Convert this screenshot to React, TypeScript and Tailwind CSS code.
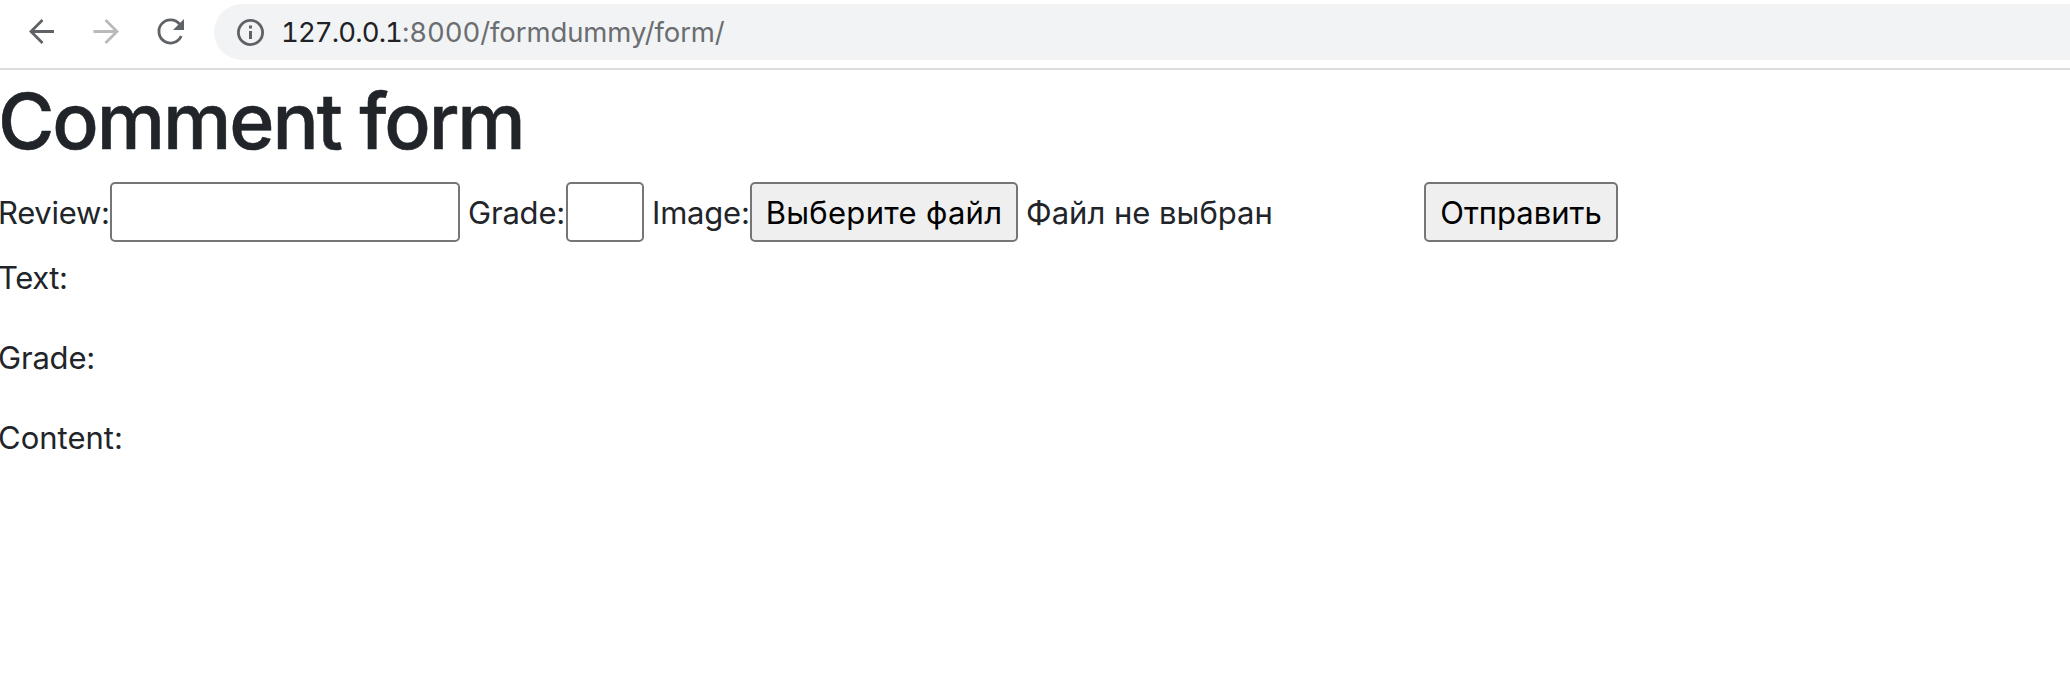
function Toolbar() {
  return (
    <header className="flex h-[70px] w-full shrink-0 items-start border-b-2 border-[#dadce0] bg-white pt-1">
      <div className="flex h-14 w-[214px] shrink-0">
        <svg className="h-14 w-[214px]" viewBox="0 4 214 56" fill="none">
          <path d="M54 31.5H31M42.5 20L31 31.5L42.5 43" stroke="#5f6368" strokeWidth="2.8" />
          <path d="M93.5 31.5H117M105.5 20L117 31.5L105.5 43" stroke="#bababb" strokeWidth="2.8" />
          <path d="M179.6 24.2A11.6 11.6 0 1 0 181.2 36" stroke="#5f6368" strokeWidth="2.8" />
          <path d="M184 19V30H173Z" fill="#5f6368" />
        </svg>
      </div>
      <div className="flex h-14 flex-1 items-center rounded-l-full bg-[#f1f3f4] pl-[22px]">
        <svg className="size-[29px] shrink-0" viewBox="0 0 29 29" fill="none">
          <circle cx="14.5" cy="14.5" r="12.1" stroke="#5f6368" strokeWidth="2.8" />
          <path d="M13 13h3v8h-3zM13 7.6h3v3h-3z" fill="#5f6368" />
        </svg>
        <span className="ml-4 pt-0.5 text-[27.5px] leading-none whitespace-nowrap tabular-nums">
          <span className="tracking-[-0.9px] text-[#202124]">127.0.0.1</span>
          <span className="tracking-[-0.1px] text-[#6b6d70]">:8000/formdummy/form/</span>
        </span>
      </div>
    </header>
  );
}

const button =
  "flex h-[60px] shrink-0 items-center justify-center rounded-[5px] border-2 border-[#767676] bg-[#efefef] pt-0.5 text-black whitespace-nowrap";
const field = "h-[60px] shrink-0 rounded-[5px] border-2 border-[#767676] bg-white outline-none";

export default function App() {
  return (
    <div className="flex h-[694px] w-full flex-col bg-white font-['Inter','Noto_Sans',sans-serif] text-[31px] text-[#212529]">
      <Toolbar />
      <main className="flex flex-col">
        <h1 className="-ml-0.5 h-[112px] pt-0.5 text-[77px] leading-[98px] font-medium tracking-[-2.1px] whitespace-nowrap [-webkit-text-stroke:0.5px_#212529]">
          Comment form
        </h1>
        <form className="flex h-[60px] items-center leading-[48px] tracking-[-0.2px] whitespace-nowrap">
          <label className="-ml-0.5 w-28 shrink-0 pt-0.5 tracking-[-0.3px]">Review:</label>
          <input aria-label="Review" className={field + " w-[350px]"} />
          <label className="w-[106px] shrink-0 pt-0.5 pl-2">Grade:</label>
          <input aria-label="Grade" className={field + " w-[78px]"} />
          <label className="w-[106px] shrink-0 pt-0.5 pl-2">Image:</label>
          <button type="button" className={button + " w-[268px] tracking-[0.3px]"}>
            Выберите файл
          </button>
          <span className="w-[406px] shrink-0 pt-0.5 pl-2 tracking-normal">Файл не выбран</span>
          <button type="button" className={button + " w-[194px] tracking-normal"}>
            Отправить
          </button>
        </form>
        <div className="-ml-0.5 flex flex-col gap-8 pt-3 leading-[48px] tracking-[-0.2px]">
          <p className="tracking-[-0.4px]">Text:</p>
          <p>Grade:</p>
          <p className="tracking-normal">Content:</p>
        </div>
      </main>
    </div>
  );
}
